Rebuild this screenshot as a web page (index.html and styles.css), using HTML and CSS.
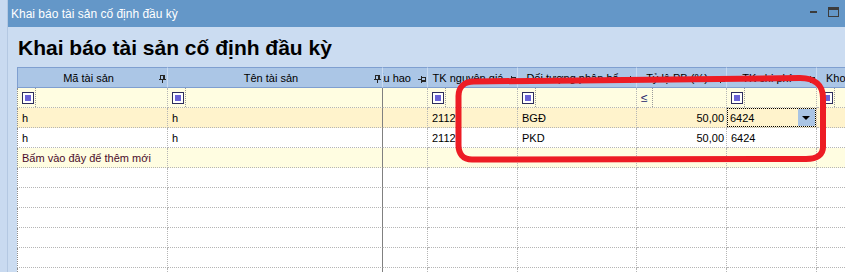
FILE: index.html
```html
<!DOCTYPE html>
<html lang="vi">
<head>
    <meta charset="UTF-8">
    <title>Khai báo tài sản cố định đầu kỳ</title>
    <link rel="stylesheet" href="styles.css">
</head>
<body>
<div class="screen">
    <div class="edge"></div>
    <div class="window">
        <div class="titlebar">
            <span class="title">Khai báo tài sản cố định đầu kỳ</span>
            <div class="controls">
                <span class="btn-min"></span>
                <span class="btn-max"></span>
            </div>
        </div>

        <div class="content">
            <h1 class="heading">Khai báo tài sản cố định đầu kỳ</h1>

            <!-- Grid -->
            <div class="grid">
                <table>
                    <colgroup>
                        <col class="w-code"><col class="w-name"><col class="w-dep"><col class="w-acc">
                        <col class="w-obj"><col class="w-rate"><col class="w-cost"><col class="w-store">
                    </colgroup>
                    <thead>
                        <tr>
                            <th><div class="cell head"><span class="label">Mã tài sản</span><svg class="pin" viewBox="0 0 7 8"><path d="M1 0h5v1H1zM1 1h1v3H1zM4 1h2v3H4zM0 4h7v1H0zM3 5h1v3H3z"/></svg></div></th>
                            <th><div class="cell head"><span class="label">Tên tài sản</span><svg class="pin" viewBox="0 0 7 8"><path d="M1 0h5v1H1zM1 1h1v3H1zM4 1h2v3H4zM0 4h7v1H0zM3 5h1v3H3z"/></svg></div></th>
                            <th><div class="cell head"><span class="label clip"><span>Khấu hao</span></span><svg class="pin side" viewBox="0 0 8 7"><path d="M0 3h3v1H0zM3 0h1v7H3zM4 1h4v1H4zM4 4h4v2H4zM7 2h1v2H7z"/></svg></div></th>
                            <th><div class="cell head"><span class="label">TK nguyên giá</span><svg class="pin side" viewBox="0 0 8 7"><path d="M0 3h3v1H0zM3 0h1v7H3zM4 1h4v1H4zM4 4h4v2H4zM7 2h1v2H7z"/></svg></div></th>
                            <th><div class="cell head"><span class="label">Đối tượng phân bổ</span><svg class="pin side" viewBox="0 0 8 7"><path d="M0 3h3v1H0zM3 0h1v7H3zM4 1h4v1H4zM4 4h4v2H4zM7 2h1v2H7z"/></svg></div></th>
                            <th><div class="cell head"><span class="label">Tỷ lệ PB (%)</span><svg class="pin side" viewBox="0 0 8 7"><path d="M0 3h3v1H0zM3 0h1v7H3zM4 1h4v1H4zM4 4h4v2H4zM7 2h1v2H7z"/></svg></div></th>
                            <th><div class="cell head"><span class="label">TK chi phí</span><svg class="pin side" viewBox="0 0 8 7"><path d="M0 3h3v1H0zM3 0h1v7H3zM4 1h4v1H4zM4 4h4v2H4zM7 2h1v2H7z"/></svg></div></th>
                            <th><div class="cell head"><span class="label left">Kho</span></div></th>
                        </tr>
                    </thead>
                    <tbody>
                        <tr class="filter">
                            <td><div class="cell fcell"><span class="op"><span class="chk"></span></span></div></td>
                            <td><div class="cell fcell"><span class="op"><span class="chk"></span></span></div></td>
                            <td><div class="cell fcell"></div></td>
                            <td><div class="cell fcell"><span class="op"><span class="chk"></span></span></div></td>
                            <td><div class="cell fcell"><span class="op"><span class="chk"></span></span></div></td>
                            <td><div class="cell fcell"><span class="op"><span class="le">≤</span></span></div></td>
                            <td><div class="cell fcell"><span class="op"><span class="chk"></span></span></div></td>
                            <td><div class="cell fcell"><span class="op"><span class="chk"></span></span></div></td>
                        </tr>
                        <tr class="hot">
                            <td><div class="cell">h</div></td>
                            <td><div class="cell">h</div></td>
                            <td><div class="cell"></div></td>
                            <td><div class="cell">2112</div></td>
                            <td><div class="cell">BGĐ</div></td>
                            <td><div class="cell num">50,00</div></td>
                            <td class="focus"><div class="editor"><span class="value">6424</span><span class="drop"></span></div></td>
                            <td><div class="cell"></div></td>
                        </tr>
                        <tr>
                            <td><div class="cell">h</div></td>
                            <td><div class="cell">h</div></td>
                            <td><div class="cell"></div></td>
                            <td><div class="cell">2112</div></td>
                            <td><div class="cell">PKD</div></td>
                            <td><div class="cell num">50,00</div></td>
                            <td><div class="cell">6424</div></td>
                            <td><div class="cell"></div></td>
                        </tr>
                        <tr class="addrow">
                            <td><div class="cell add-text">Bấm vào đây để thêm mới</div></td>
                            <td><div class="cell"></div></td>
                            <td><div class="cell"></div></td>
                            <td><div class="cell"></div></td>
                            <td><div class="cell"></div></td>
                            <td><div class="cell"></div></td>
                            <td><div class="cell"></div></td>
                            <td><div class="cell"></div></td>
                        </tr>
                        <tr><td><div class="cell"></div></td><td><div class="cell"></div></td><td><div class="cell"></div></td><td><div class="cell"></div></td><td><div class="cell"></div></td><td><div class="cell"></div></td><td><div class="cell"></div></td><td><div class="cell"></div></td></tr>
                        <tr><td><div class="cell"></div></td><td><div class="cell"></div></td><td><div class="cell"></div></td><td><div class="cell"></div></td><td><div class="cell"></div></td><td><div class="cell"></div></td><td><div class="cell"></div></td><td><div class="cell"></div></td></tr>
                        <tr><td><div class="cell"></div></td><td><div class="cell"></div></td><td><div class="cell"></div></td><td><div class="cell"></div></td><td><div class="cell"></div></td><td><div class="cell"></div></td><td><div class="cell"></div></td><td><div class="cell"></div></td></tr>
                        <tr><td><div class="cell"></div></td><td><div class="cell"></div></td><td><div class="cell"></div></td><td><div class="cell"></div></td><td><div class="cell"></div></td><td><div class="cell"></div></td><td><div class="cell"></div></td><td><div class="cell"></div></td></tr>
                        <tr><td><div class="cell"></div></td><td><div class="cell"></div></td><td><div class="cell"></div></td><td><div class="cell"></div></td><td><div class="cell"></div></td><td><div class="cell"></div></td><td><div class="cell"></div></td><td><div class="cell"></div></td></tr>
                        <tr><td><div class="cell"></div></td><td><div class="cell"></div></td><td><div class="cell"></div></td><td><div class="cell"></div></td><td><div class="cell"></div></td><td><div class="cell"></div></td><td><div class="cell"></div></td><td><div class="cell"></div></td></tr>
                    </tbody>
                </table>
            </div>
        </div>
    </div>

    <!-- red hand-drawn markup -->
    <svg class="markup" viewBox="0 0 845 272">
        <path d="M474 81.5 L800 78 C815 78 823 85.5 823 98 L823 147 C823 154 818 159 806 159 L472 159.5 C463 159.5 458.5 153.5 458.5 145 L458.5 96 C458.5 87.5 464 81.5 474 81.5 Z"/>
    </svg>
</div>
</body>
</html>
```

FILE: styles.css
```css
* {
    box-sizing: border-box;
}
body {
    margin: 0;
    width: 845px;
    height: 272px;
    overflow: hidden;
    background: #cbdcf1;
    font-family: "Liberation Sans", Arial, sans-serif;
    font-size: 11px;
    color: #000;
}
.screen {
    position: relative;
    display: flex;
    height: 272px;
}
.edge {
    flex: none;
    width: 8px;
    background: #c9daf0;
    border-right: 1px solid #b4c8e2;
}
.window {
    flex: 1;
    min-width: 0;
    display: flex;
    flex-direction: column;
}
.titlebar {
    flex: none;
    height: 27px;
    display: flex;
    align-items: center;
    padding: 0 6px 0 3px;
    background: #6497c8;
}
.title {
    color: #fff;
    font-size: 12px;
    line-height: 14px;
}
.controls {
    align-self: flex-start;
    margin-top: 7px;
    margin-left: auto;
    display: flex;
    align-items: flex-start;
    gap: 11px;
}
.btn-min {
    width: 7px;
    height: 2px;
    margin-top: 4px;
    background: #3c3c3c;
}
.btn-max {
    width: 11px;
    height: 10px;
    border: 1px solid #3c3c3c;
    border-top-width: 3px;
}
.content {
    flex: 1;
    min-height: 0;
    display: flex;
    flex-direction: column;
    padding: 9px 0 0 9px;
}
.heading {
    margin: 0 0 7px 1px;
    font-size: 21px;
    line-height: 24px;
    font-weight: bold;
}
.grid {
    flex: 1;
    overflow: hidden;
    background: #fff;
}
table {
    table-layout: fixed;
    width: 900px;
    border-spacing: 0;
}
.w-code { width: 151px; }
.w-name { width: 215px; }
.w-dep { width: 45px; }
.w-acc { width: 90px; }
.w-obj { width: 119px; }
.w-rate { width: 90px; }
.w-cost { width: 90px; }
.w-store { width: 100px; }
th, td {
    padding: 0;
    border-right: 1px dotted #b5b5b5;
    border-bottom: 1px dotted #b5b5b5;
    font-weight: normal;
    text-align: left;
    vertical-align: top;
    white-space: nowrap;
    overflow: hidden;
}
td:first-child {
    border-left: 1px dotted #8c8c8c;
}
td:nth-child(2) {
    border-right: 1px solid #808080;
}
th {
    background: #abc6e6;
    border-top: 1px solid #7f9fd0;
    border-bottom: 1px solid #7f9fd0;
    border-right: 1px solid #c9daf0;
}
th:first-child {
    border-left: 1px solid #7f9fd0;
}
.cell {
    height: 19px;
    padding: 1px 4px 0;
    line-height: 18px;
    overflow: hidden;
}
.head {
    display: flex;
    padding-right: 1px;
}
.label {
    flex: 1;
    min-width: 0;
    margin-right: 4px;
    text-align: center;
    overflow: hidden;
}
.label.clip {
    display: flex;
    justify-content: flex-end;
    margin-left: -4px;
    margin-right: 7px;
}
.label.clip span {
    flex: none;
}
.label.left {
    text-align: left;
    padding-left: 5px;
}
.pin {
    flex: none;
    width: 7px;
    height: 8px;
    margin-top: 6px;
    fill: #262626;
}
.pin.side {
    width: 8px;
    height: 7px;
    margin-top: 7px;
}
.filter td,
.addrow td {
    background: #fffde1;
}
.hot td {
    background: #fff3cc;
}
.fcell {
    display: flex;
    align-items: stretch;
    padding: 0 4px;
}
.op {
    display: flex;
    align-items: center;
    padding-right: 1px;
    border-right: 1px dotted #9a9a9a;
}
.chk {
    width: 12px;
    height: 12px;
    padding: 2px;
    border: 1px solid #2c2c5c;
    background: #fff;
}
.chk::after {
    content: "";
    display: block;
    width: 6px;
    height: 6px;
    background: #6b63d6;
}
.le {
    color: #1c1c6c;
    padding-right: 3px;
    font-size: 12px;
    line-height: 12px;
}
.num {
    text-align: right;
    padding-right: 2px;
}
.add-text {
    color: #4a0c2a;
}
.focus {
    padding: 0;
}
.editor {
    display: flex;
    height: 19px;
    border: 1px dotted #000;
}
.value {
    flex: 1;
    padding: 0 0 0 2px;
    line-height: 18px;
}
.drop {
    position: relative;
    width: 17px;
    background: #a9c4e4;
}
.drop::after {
    content: "";
    position: absolute;
    left: 4px;
    top: 7px;
    border-left: 4px solid transparent;
    border-right: 4px solid transparent;
    border-top: 4px solid #000;
}
.markup {
    position: absolute;
    left: 0;
    top: 0;
    width: 845px;
    height: 272px;
    pointer-events: none;
}
.markup path {
    fill: none;
    stroke: #ed1c24;
    stroke-width: 6;
}
```
